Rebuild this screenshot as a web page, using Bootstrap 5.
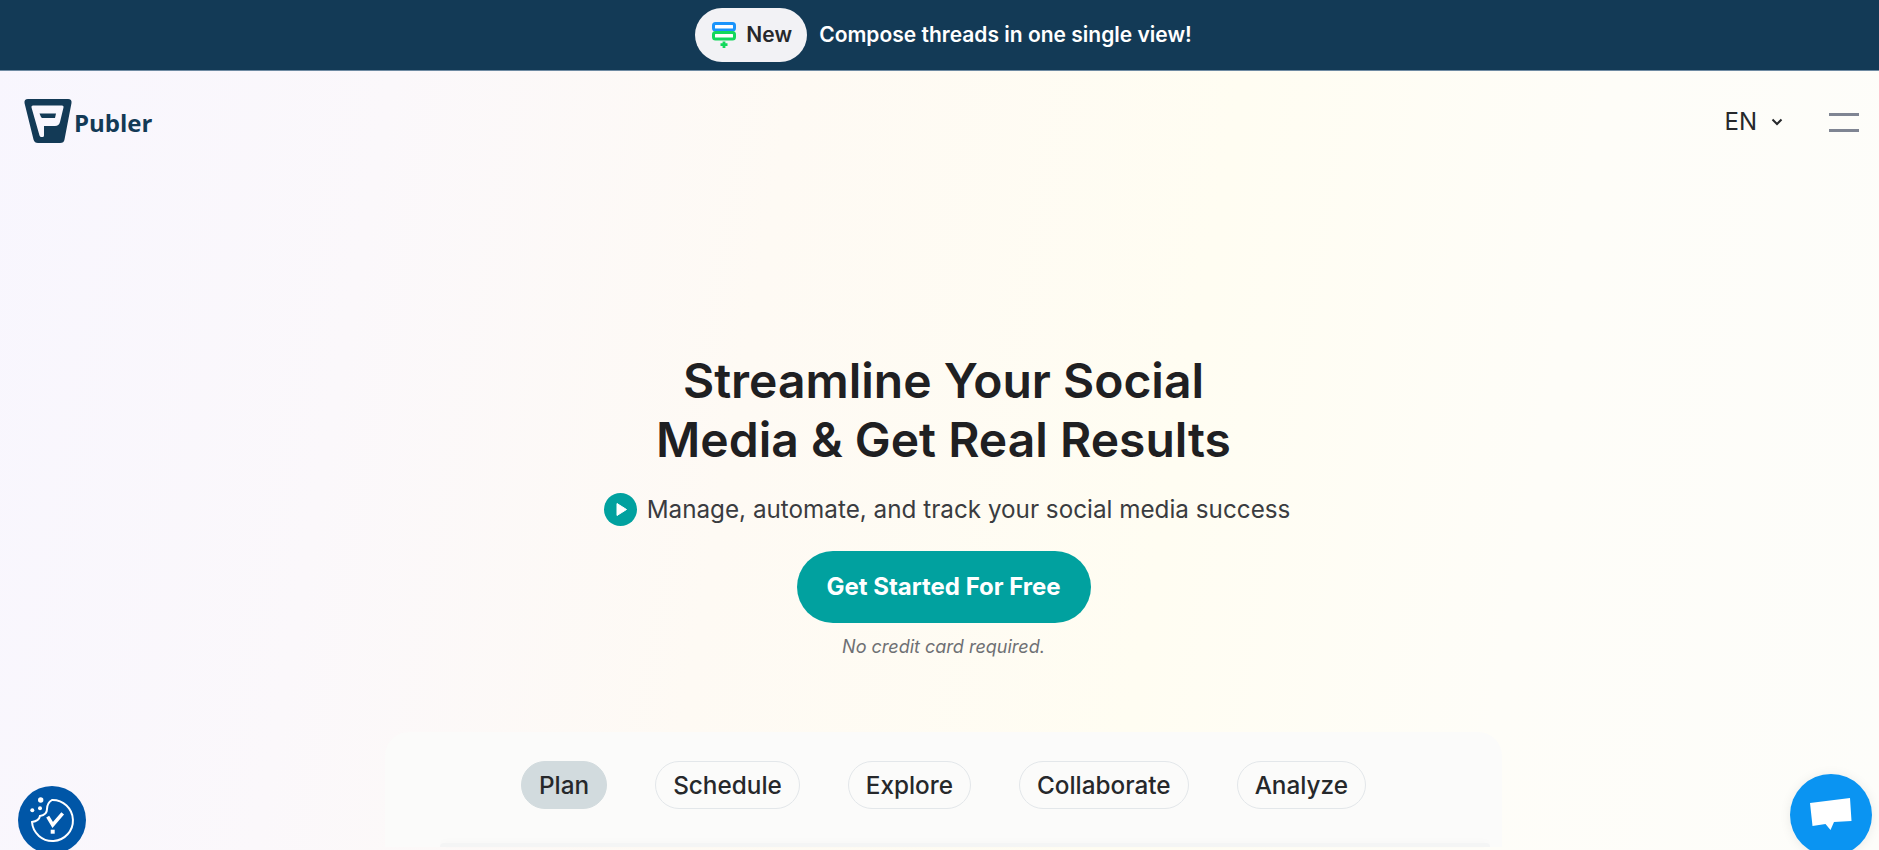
<!DOCTYPE html>
<html lang="en">
<head>
  <meta charset="UTF-8">
  <meta name="viewport" content="width=device-width, initial-scale=1.0">
  <title>Publer</title>
  <link href="https://cdn.jsdelivr.net/npm/bootstrap@5.3.0/dist/css/bootstrap.min.css" rel="stylesheet">
  <style>
    html, body { height: 100%; overflow: hidden; }
    body {
      font-family: Inter, "Liberation Sans", sans-serif;
      color: #1f2022;
      background: linear-gradient(100deg, #f8f6fe 0%, #fbf8fb 20%, #fefaf4 40%, #fffdf2 62%, #fefdf8 80%, #fdfdfa 100%);
    }
    .promo-bar { height: 71px; padding-left: 8px; background: #133a56; border-bottom: 1px solid #6f8ba3; gap: 12px; }
    .promo-pill {
      width: 112px; height: 54px; gap: 10px; padding-left: 2px;
      background: #f2f2f5; color: #26282b;
      font-size: 21px; font-weight: 600;
    }
    .promo-text { color: #fff; font-size: 21px; font-weight: 600; margin-top: -1px; }
    .top-nav { height: 90px; padding: 12px 20px 0 24px; }
    .brand-link { color: #133a56; gap: 2px; text-decoration: none; margin-top: -2px; }
    .brand-name { font-family: "Open Sans", sans-serif; font-size: 24px; font-weight: 700; line-height: 1; margin-top: 3px; }
    .lang-btn { color: #26282b; font-size: 24px; gap: 14px; background: none; border: 0; padding: 0; margin-right: 46px; }
    .burger-btn { width: 30px; gap: 13px; background: none; border: 0; padding: 0; }
    .burger-btn span { display: block; height: 3px; background: #7f8593; }
    .hero-block { padding: 190px 0 0 8px; }
    .hero-title { font-size: 48px; font-weight: 600; line-height: 59px; margin: 0; color: #1f2022; }
    .hero-sub { font-size: 24.250px; color: #3a3c40; gap: 10px; margin: 24px 0 0 7px; line-height: 33px; }
    .btn-start {
      width: 294px; height: 72px; margin-top: 25px;
      background: #01a19f; color: #fff; border: 0;
      font-size: 24px; font-weight: 700;
    }
    .btn-start:hover { background: #019391; color: #fff; }
    .no-card { font-size: 18px; font-style: italic; color: #6e7074; margin-top: 12px; line-height: 24px; }
    .tabs-panel {
      width: 1117px; height: 115px; margin: 73px 0 0 385px; padding-top: 29px;
      background: #fbfbfa; border-radius: 24px 24px 0 0;
    }
    .tabs-row { gap: 48px; }
    .tab-pill {
      height: 48px; padding: 0 17px; font-size: 24.300px; font-weight: 500;
      color: #26282b; background: transparent; border: 1px solid #e3e7ea;
    }
    .tab-pill.is-active { background: #d2dbde; border-color: #d2dbde; }
    .preview-card { height: 4px; margin: 34px 12px 0 55px; background: #f4f5f5; border-radius: 8px 8px 0 0; box-shadow: 0 -2px 6px rgba(0,0,0,.02); }
    .float-round { position: fixed; z-index: 5; }
    .cookie-btn { left: 18px; top: 786px; width: 68px; height: 68px; background: #0056a7; }
    .chat-btn { left: 1790px; top: 774px; width: 82px; height: 82px; background: #0a94f2; box-shadow: 0 1px 12px rgba(0,0,0,.08); }
  </style>
</head>
<body>
  <div class="promo-bar d-flex justify-content-center align-items-center">
    <a class="promo-pill rounded-pill d-flex justify-content-center align-items-center text-decoration-none" href="#">
      <svg width="24" height="26" viewBox="0 0 24 26">
        <rect x="1.500" y="1.500" width="21" height="6.500" rx="2" fill="#fff" stroke="#1a94fb" stroke-width="3"/>
        <rect x="1.500" y="10.500" width="21" height="6.500" rx="2" fill="#fff" stroke="#12d85c" stroke-width="3"/>
        <path d="M12 19.500v6.500M8.500 22.700h7" stroke="#12d85c" stroke-width="2.800"/>
      </svg>
      <span>New</span>
    </a>
    <span class="promo-text">Compose threads in one single view!</span>
  </div>

  <nav class="top-nav d-flex justify-content-between align-items-center">
    <a class="brand-link d-flex align-items-center" href="#">
      <svg width="48" height="44" viewBox="0 0 48 44">
        <path fill-rule="evenodd" fill="#133a56" d="M4 0H44Q48 0 47.500 4L40.500 40.500Q40 44 36 44H14Q10.500 44 9.500 40.500L.5 4Q0 0 4 0ZM9 6.500Q7 6.500 7.500 8.500L15.500 36.500Q16 38 17.500 38H18.500Q20 38 20 36.500V27H31Q35 27 36 23L39.500 8.500Q40 6.500 38 6.500ZM15.500 14.500H32L31 19H18.500Q17.500 19 17 18Z"/>
      </svg>
      <span class="brand-name">Publer</span>
    </a>
    <div class="d-flex align-items-center">
      <button class="lang-btn d-flex align-items-center" type="button">
        EN
        <svg width="12" height="8" viewBox="0 0 12 8"><path d="M1.500 1.500 6 6l4.500-4.500" fill="none" stroke="#26282b" stroke-width="2"/></svg>
      </button>
      <button class="burger-btn d-flex flex-column" type="button" aria-label="Menu"><span></span><span></span></button>
    </div>
  </nav>

  <main class="hero-block d-flex flex-column align-items-center text-center">
    <h1 class="hero-title">Streamline Your Social<br>Media &amp; Get Real Results</h1>
    <div class="hero-sub d-flex align-items-center">
      <svg width="33" height="33" viewBox="0 0 33 33">
        <circle cx="16.500" cy="16.500" r="16.500" fill="#01a19f"/>
        <path d="M13 10.500v12l9.500-6z" fill="#fff" stroke="#fff" stroke-linejoin="round"/>
      </svg>
      <span>Manage, automate, and track your social media success</span>
    </div>
    <a class="btn btn-start rounded-pill d-flex justify-content-center align-items-center" href="#">Get Started For Free</a>
    <p class="no-card mb-0">No credit card required.</p>
  </main>

  <section class="tabs-panel">
    <div class="tabs-row d-flex justify-content-center align-items-start">
      <button class="tab-pill is-active rounded-pill" type="button">Plan</button>
      <button class="tab-pill rounded-pill" type="button">Schedule</button>
      <button class="tab-pill rounded-pill" type="button">Explore</button>
      <button class="tab-pill rounded-pill" type="button">Collaborate</button>
      <button class="tab-pill rounded-pill" type="button">Analyze</button>
    </div>
    <div class="preview-card"></div>
  </section>

  <a class="float-round cookie-btn rounded-circle d-flex justify-content-center align-items-center" href="#" aria-label="Cookie settings">
    <svg width="46" height="46" viewBox="0 0 46 46" fill="none" stroke="#fff" stroke-width="2">
      <path d="M23 3A20.500 20.500 0 1 1 3 25Q10 24 11 19Q18 18 18 12Q18 6 23 3Z"/>
      <path d="M18.700 19.700 23.700 28 33.700 16.300" stroke-width="3.500"/>
      <rect x="21.700" y="32.700" width="4" height="4" fill="#fff" stroke="none"/>
      <circle cx="11.700" cy="3" r="2.700" fill="#fff" stroke="none"/>
      <circle cx="11" cy="11.300" r="2" fill="#fff" stroke="none"/>
      <circle cx="3.300" cy="13.300" r="2" fill="#fff" stroke="none"/>
    </svg>
  </a>
  <a class="float-round chat-btn rounded-circle d-flex justify-content-center align-items-center" href="#" aria-label="Chat">
    <svg width="42" height="34" viewBox="0 0 42 34">
      <path d="M0 5 40 0 41.500 23 24 24 20.500 32 15.500 26 2.500 28Z" fill="#fff"/>
    </svg>
  </a>
</body>
</html>
